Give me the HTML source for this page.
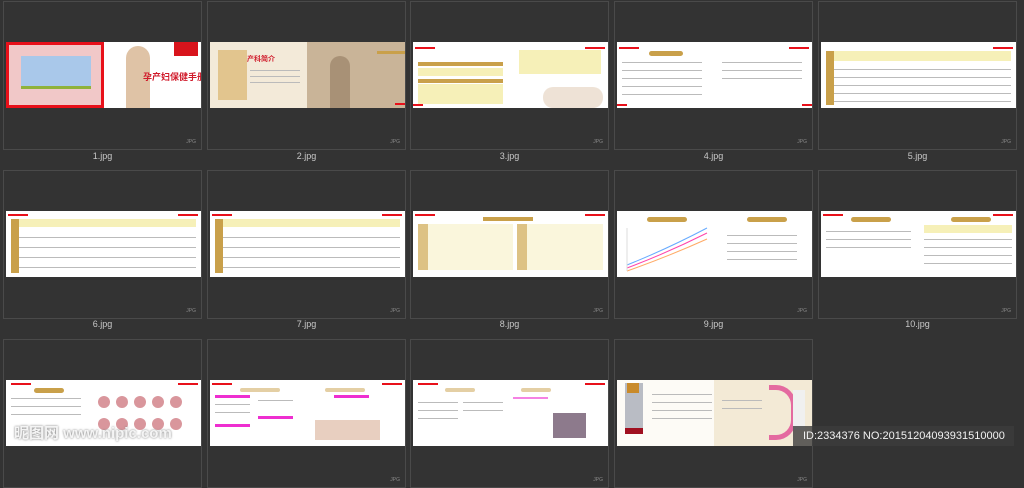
<!DOCTYPE html>
<html><head><meta charset="utf-8"><style>
body{margin:0;width:1024px;height:456px;background:#333;overflow:hidden;position:relative;font-family:"Liberation Sans","Noto Sans CJK SC",sans-serif}
.c{position:absolute;width:197px;height:147px;border:1px solid #4a4a4a;box-sizing:content-box}
.t{position:absolute;left:2px;top:40px;width:195px;height:66px;background:#fff;overflow:hidden}
.l{position:absolute;width:199px;text-align:center;color:#c8c8c8;font-size:9px}
.j{position:absolute;right:5px;bottom:4px;color:#888;font-size:5px}
.r{position:absolute;height:2px;background:#e8101a}
.g{position:absolute;background:#c9a04a}
.y{position:absolute;background:#f6f0b8}
.ln{position:absolute;height:1px;background:#bbb}
.pk{position:absolute;background:#ee2fd0}
</style></head><body>

<!-- row 1 -->
<div class="c" style="left:3px;top:1px"><div class="t">
<div style="position:absolute;left:0;top:0;width:98px;height:66px;background:#e8101a"></div>
<div style="position:absolute;left:3px;top:3px;width:92px;height:60px;background:#f1c8c8"></div>
<div style="position:absolute;left:15px;top:14px;width:70px;height:32px;background:#a9c8ea"></div>
<div style="position:absolute;left:15px;top:44px;width:70px;height:3px;background:#8fb23a"></div>
<div style="position:absolute;left:120px;top:4px;width:24px;height:62px;background:#dfc3a6;border-radius:12px 12px 0 0"></div>
<div style="position:absolute;left:168px;top:0;width:24px;height:14px;background:#d8141c"></div>
<div style="position:absolute;left:137px;top:28px;color:#d01a2a;font-size:9px;font-weight:bold;white-space:nowrap">孕产妇保健手册</div>
</div><div class="j">JPG</div></div>
<div class="l" style="left:3px;top:151px">1.jpg</div>

<div class="c" style="left:207px;top:1px"><div class="t" style="background:#f3ead9">
<div style="position:absolute;left:97px;top:0;width:98px;height:66px;background:#c9b498"></div>
<div style="position:absolute;left:8px;top:8px;width:29px;height:50px;background:#e2c58e"></div>
<div style="position:absolute;left:120px;top:14px;width:20px;height:52px;background:#a89176;border-radius:10px 10px 0 0"></div>
<div style="position:absolute;left:37px;top:12px;color:#d01a2a;font-size:7px;font-weight:bold">产科简介</div>
<div class="ln" style="left:40px;top:28px;width:50px"></div><div class="ln" style="left:40px;top:34px;width:50px"></div><div class="ln" style="left:40px;top:40px;width:50px"></div>
<div class="g" style="left:167px;top:9px;width:28px;height:3px"></div>
<div class="r" style="left:185px;top:61px;width:10px"></div>
</div><div class="j">JPG</div></div>
<div class="l" style="left:207px;top:151px">2.jpg</div>

<div class="c" style="left:410px;top:1px"><div class="t">
<div class="r" style="left:2px;top:5px;width:20px"></div><div class="r" style="left:172px;top:5px;width:20px"></div>
<div class="g" style="left:5px;top:20px;width:85px;height:4px"></div>
<div class="y" style="left:5px;top:26px;width:85px;height:8px"></div>
<div class="g" style="left:5px;top:37px;width:85px;height:4px"></div>
<div class="y" style="left:5px;top:42px;width:85px;height:20px"></div>
<div class="y" style="left:106px;top:8px;width:82px;height:24px"></div>
<div style="position:absolute;left:130px;top:45px;width:60px;height:21px;background:#eee2d6;border-radius:10px"></div>
<div class="r" style="left:0;top:62px;width:10px"></div>
</div><div class="j">JPG</div></div>
<div class="l" style="left:410px;top:151px">3.jpg</div>

<div class="c" style="left:614px;top:1px"><div class="t">
<div class="r" style="left:2px;top:5px;width:20px"></div><div class="r" style="left:172px;top:5px;width:20px"></div>
<div class="g" style="left:32px;top:9px;width:34px;height:5px;border-radius:3px"></div>
<div class="ln" style="left:5px;top:20px;width:80px"></div><div class="ln" style="left:5px;top:28px;width:80px"></div><div class="ln" style="left:5px;top:36px;width:80px"></div><div class="ln" style="left:5px;top:44px;width:80px"></div><div class="ln" style="left:5px;top:52px;width:80px"></div>
<div class="ln" style="left:105px;top:20px;width:80px"></div><div class="ln" style="left:105px;top:28px;width:80px"></div><div class="ln" style="left:105px;top:36px;width:80px"></div>
<div class="r" style="left:0;top:62px;width:10px"></div><div class="r" style="left:185px;top:62px;width:10px"></div>
</div><div class="j">JPG</div></div>
<div class="l" style="left:614px;top:151px">4.jpg</div>

<div class="c" style="left:818px;top:1px"><div class="t">
<div class="r" style="left:172px;top:5px;width:20px"></div>
<div class="y" style="left:5px;top:9px;width:185px;height:10px"></div>
<div class="g" style="left:5px;top:9px;width:8px;height:54px"></div>
<div class="ln" style="left:13px;top:27px;width:177px"></div><div class="ln" style="left:13px;top:35px;width:177px"></div><div class="ln" style="left:13px;top:43px;width:177px"></div><div class="ln" style="left:13px;top:51px;width:177px"></div><div class="ln" style="left:13px;top:59px;width:177px"></div>
</div><div class="j">JPG</div></div>
<div class="l" style="left:818px;top:151px">5.jpg</div>

<!-- row 2 -->
<div class="c" style="left:3px;top:170px"><div class="t">
<div class="r" style="left:2px;top:3px;width:20px"></div><div class="r" style="left:172px;top:3px;width:20px"></div>
<div class="y" style="left:5px;top:8px;width:185px;height:8px"></div>
<div class="g" style="left:5px;top:8px;width:8px;height:54px"></div>
<div class="ln" style="left:13px;top:26px;width:177px"></div><div class="ln" style="left:13px;top:36px;width:177px"></div><div class="ln" style="left:13px;top:46px;width:177px"></div><div class="ln" style="left:13px;top:56px;width:177px"></div>
</div><div class="j">JPG</div></div>
<div class="l" style="left:3px;top:319px">6.jpg</div>

<div class="c" style="left:207px;top:170px"><div class="t">
<div class="r" style="left:2px;top:3px;width:20px"></div><div class="r" style="left:172px;top:3px;width:20px"></div>
<div class="y" style="left:5px;top:8px;width:185px;height:8px"></div>
<div class="g" style="left:5px;top:8px;width:8px;height:54px"></div>
<div class="ln" style="left:13px;top:26px;width:177px"></div><div class="ln" style="left:13px;top:36px;width:177px"></div><div class="ln" style="left:13px;top:46px;width:177px"></div><div class="ln" style="left:13px;top:56px;width:177px"></div>
</div><div class="j">JPG</div></div>
<div class="l" style="left:207px;top:319px">7.jpg</div>

<div class="c" style="left:410px;top:170px"><div class="t">
<div class="r" style="left:2px;top:3px;width:20px"></div><div class="r" style="left:172px;top:3px;width:20px"></div>
<div class="g" style="left:70px;top:6px;width:50px;height:4px"></div>
<div class="y" style="left:5px;top:13px;width:95px;height:46px;background:#faf6dc"></div>
<div class="g" style="left:5px;top:13px;width:10px;height:46px;opacity:.6"></div>
<div class="y" style="left:104px;top:13px;width:86px;height:46px;background:#faf6dc"></div>
<div class="g" style="left:104px;top:13px;width:10px;height:46px;opacity:.6"></div>
</div><div class="j">JPG</div></div>
<div class="l" style="left:410px;top:319px">8.jpg</div>

<div class="c" style="left:614px;top:170px"><div class="t">
<div class="g" style="left:30px;top:6px;width:40px;height:5px;border-radius:3px"></div>
<div class="g" style="left:130px;top:6px;width:40px;height:5px;border-radius:3px"></div>
<svg style="position:absolute;left:5px;top:12px" width="90" height="50"><g fill="none" stroke-width="1"><path d="M5 45 Q45 30 85 10" stroke="#f4a"/><path d="M5 48 Q45 34 85 16" stroke="#fa6"/><path d="M5 42 Q45 26 85 5" stroke="#6af"/></g><g stroke="#ddd"><line x1="5" y1="5" x2="5" y2="48"/></g></svg>
<div class="ln" style="left:110px;top:24px;width:70px"></div><div class="ln" style="left:110px;top:32px;width:70px"></div><div class="ln" style="left:110px;top:40px;width:70px"></div><div class="ln" style="left:110px;top:48px;width:70px"></div>
</div><div class="j">JPG</div></div>
<div class="l" style="left:614px;top:319px">9.jpg</div>

<div class="c" style="left:818px;top:170px"><div class="t">
<div class="r" style="left:2px;top:3px;width:20px"></div><div class="r" style="left:172px;top:3px;width:20px"></div>
<div class="g" style="left:30px;top:6px;width:40px;height:5px;border-radius:3px"></div>
<div class="g" style="left:130px;top:6px;width:40px;height:5px;border-radius:3px"></div>
<div class="ln" style="left:5px;top:20px;width:85px"></div><div class="ln" style="left:5px;top:28px;width:85px"></div><div class="ln" style="left:5px;top:36px;width:85px"></div>
<div class="y" style="left:103px;top:14px;width:88px;height:8px"></div>
<div class="ln" style="left:103px;top:28px;width:88px"></div><div class="ln" style="left:103px;top:36px;width:88px"></div><div class="ln" style="left:103px;top:44px;width:88px"></div><div class="ln" style="left:103px;top:52px;width:88px"></div>
</div><div class="j">JPG</div></div>
<div class="l" style="left:818px;top:319px">10.jpg</div>

<!-- row 3 -->
<div class="c" style="left:3px;top:339px"><div class="t">
<div class="r" style="left:5px;top:3px;width:20px"></div><div class="r" style="left:172px;top:3px;width:20px"></div>
<div class="g" style="left:28px;top:8px;width:30px;height:5px;border-radius:3px"></div>
<div class="ln" style="left:5px;top:18px;width:70px"></div><div class="ln" style="left:5px;top:26px;width:70px"></div><div class="ln" style="left:5px;top:34px;width:70px"></div>
<svg style="position:absolute;left:90px;top:14px" width="100" height="50"><g fill="#d9969c"><circle cx="8" cy="8" r="6"/><circle cx="26" cy="8" r="6"/><circle cx="44" cy="8" r="6"/><circle cx="62" cy="8" r="6"/><circle cx="80" cy="8" r="6"/><circle cx="8" cy="30" r="6"/><circle cx="26" cy="30" r="6"/><circle cx="44" cy="30" r="6"/><circle cx="62" cy="30" r="6"/><circle cx="80" cy="30" r="6"/></g></svg>
</div>
<div style="position:absolute;left:10px;top:82px;color:#f4f4f4;font-size:15px;white-space:nowrap;font-weight:bold;text-shadow:0 0 2px #777">昵图网 www.nipic.com</div>
</div>

<div class="c" style="left:207px;top:339px"><div class="t">
<div class="r" style="left:2px;top:3px;width:20px"></div><div class="r" style="left:172px;top:3px;width:20px"></div>
<div class="g" style="left:30px;top:8px;width:40px;height:4px;border-radius:3px;opacity:.5"></div>
<div class="g" style="left:115px;top:8px;width:40px;height:4px;border-radius:3px;opacity:.5"></div>
<div class="pk" style="left:5px;top:15px;width:35px;height:3px"></div>
<div class="pk" style="left:5px;top:44px;width:35px;height:3px"></div>
<div class="pk" style="left:48px;top:36px;width:35px;height:3px"></div>
<div class="pk" style="left:124px;top:15px;width:35px;height:3px"></div>
<div class="ln" style="left:5px;top:24px;width:35px"></div><div class="ln" style="left:5px;top:32px;width:35px"></div><div class="ln" style="left:48px;top:20px;width:35px"></div>
<div style="position:absolute;left:105px;top:40px;width:65px;height:20px;background:#e8cfc0"></div>
</div><div class="j">JPG</div></div>

<div class="c" style="left:410px;top:339px"><div class="t">
<div class="r" style="left:5px;top:3px;width:20px"></div><div class="r" style="left:172px;top:3px;width:20px"></div>
<div class="g" style="left:32px;top:8px;width:30px;height:4px;border-radius:3px;opacity:.5"></div>
<div class="g" style="left:108px;top:8px;width:30px;height:4px;border-radius:3px;opacity:.5"></div>
<div class="ln" style="left:5px;top:22px;width:40px"></div><div class="ln" style="left:5px;top:30px;width:40px"></div><div class="ln" style="left:5px;top:38px;width:40px"></div><div class="ln" style="left:50px;top:22px;width:40px"></div><div class="ln" style="left:50px;top:30px;width:40px"></div>
<div class="pk" style="left:100px;top:17px;width:35px;height:2px;opacity:.6"></div>
<div style="position:absolute;left:140px;top:33px;width:33px;height:25px;background:#8d7a8c"></div>
</div><div class="j">JPG</div></div>

<div class="c" style="left:614px;top:339px"><div class="t" style="background:#fdfbf6">
<div style="position:absolute;left:97px;top:0;width:98px;height:66px;background:#f3ead6"></div>
<div style="position:absolute;left:8px;top:3px;width:18px;height:50px;background:#b9bcc4"></div>
<div style="position:absolute;left:10px;top:3px;width:12px;height:10px;background:#c98a2a"></div>
<div style="position:absolute;left:8px;top:48px;width:18px;height:6px;background:#a01020"></div>
<div class="ln" style="left:35px;top:14px;width:60px"></div><div class="ln" style="left:35px;top:22px;width:60px"></div><div class="ln" style="left:35px;top:30px;width:60px"></div><div class="ln" style="left:35px;top:38px;width:60px"></div>
<div class="ln" style="left:105px;top:20px;width:40px"></div><div class="ln" style="left:105px;top:28px;width:40px"></div>
<div style="position:absolute;left:152px;top:5px;width:22px;height:45px;border:5px solid #e46aa0;border-left:none;border-radius:0 20px 20px 0"></div>
<div style="position:absolute;left:176px;top:10px;width:12px;height:40px;background:#f0f0f0"></div>
</div><div class="j">JPG</div></div>
<div style="position:absolute;left:793px;top:426px;width:221px;height:20px;background:rgba(60,60,60,.8)"></div>
<div style="position:absolute;left:803px;top:426px;color:#f2f2f2;font-size:11px;line-height:20px;white-space:nowrap">ID:2334376 NO:20151204093931510000</div>

</body></html>
